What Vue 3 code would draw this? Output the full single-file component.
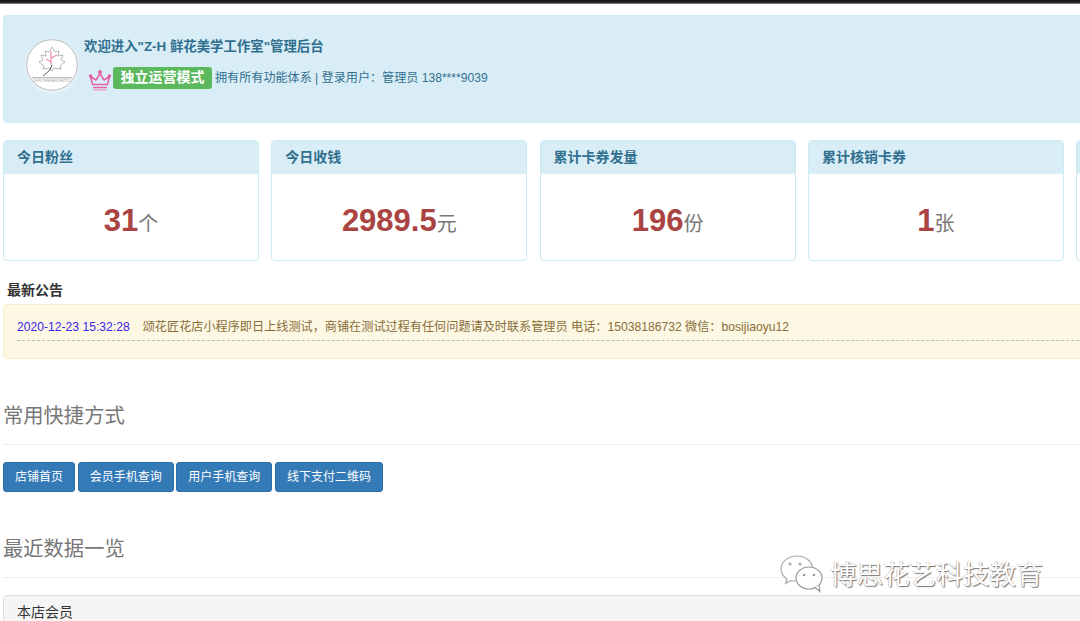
<template>
  <div class="page">
    <div class="topbar"></div>
    <div class="content">
      <div class="welcome">
        <div class="logo">
          <svg viewBox="0 0 52 52" width="52" height="52">
            <circle cx="26" cy="26" r="25.3" fill="#fff" stroke="#bbb" stroke-width="1" />
            <path d="M26 8l3 5 4-1-1 5 5-1-2 5 4 2-5 4 1 3-7-1-2 3-2-3-7 1 1-3-5-4 4-2-2-5 5 1-1-5 4 1z" fill="none" stroke="#888" stroke-width=".6" />
            <path d="M25 12v14M25 19l6-3M25 23l-5-3" fill="none" stroke="#e8668c" stroke-width=".9" />
            <path d="M26 26l-2 5-7 6" fill="none" stroke="#444" stroke-width=".9" />
            <rect x="6" y="38" width="40" height="1.4" fill="#bbb" />
          </svg>
          <span class="logo-text">ZH FLOWER AESTHETICS</span>
        </div>
        <div class="welcome-info">
          <h4 class="welcome-title">欢迎进入"Z-H 鲜花美学工作室"管理后台</h4>
          <div class="welcome-line">
            <svg class="crown" viewBox="0 0 24 22" width="24" height="22">
              <path d="M4.500 15.500L2.500 7.500l5.500 3.500L12 4.500l4 6.500 5.500-3.500-2 8z" fill="none" stroke="#e85fa5" stroke-width="1.500" stroke-linejoin="round" />
              <circle cx="2.500" cy="7" r="1.800" fill="#e85fa5" />
              <circle cx="12" cy="3" r="2" fill="#e85fa5" />
              <circle cx="21.500" cy="7" r="1.800" fill="#e85fa5" />
              <path d="M5 18.500h14" stroke="#e85fa5" stroke-width="1.400" />
              <path d="M5.500 20.800h13" stroke="#f09cc6" stroke-width="1.400" />
            </svg>
            <span class="mode-badge">独立运营模式</span>
            <span class="welcome-desc">拥有所有功能体系 | 登录用户：管理员 138****9039</span>
          </div>
        </div>
      </div>

      <div class="stats">
        <div class="stat-card" v-for="(item, i) in stats" :key="i">
          <div class="stat-head">{{ item.title }}</div>
          <div class="stat-body">
            <span class="stat-num">{{ item.value }}</span><span class="stat-unit">{{ item.unit }}</span>
          </div>
        </div>
      </div>

      <div class="notice-title">最新公告</div>
      <div class="notice">
        <div class="notice-row">
          <span class="notice-time">2020-12-23 15:32:28</span>
          <span class="notice-text">颂花匠花店小程序即日上线测试，商铺在测试过程有任何问题请及时联系管理员 电话：15038186732 微信：bosijiaoyu12</span>
        </div>
      </div>

      <h3 class="section-title">常用快捷方式</h3>
      <div class="shortcuts">
        <a class="btn" v-for="label in shortcuts" :key="label">{{ label }}</a>
      </div>

      <h3 class="section-title">最近数据一览</h3>
      <div class="panel">
        <div class="panel-head">本店会员</div>
      </div>
    </div>

    <div class="watermark">
      <svg viewBox="0 0 46 40" width="46" height="40">
        <path d="M18 2C9 2 2 8 2 15c0 4 2.400 7.500 6 10l-1.500 4.500 5.500-3c1.500.4 3 .6 4.500.6" fill="#fff" stroke="#aaa" stroke-width="1.200" />
        <path d="M18 2c8 0 14.500 5 15.500 11.500" fill="#fff" stroke="#aaa" stroke-width="1.200" />
        <ellipse cx="30" cy="24" rx="13" ry="11" fill="#fff" stroke="#999" stroke-width="1.200" />
        <path d="M36 33.500l5 4-1-6.500" fill="#fff" stroke="#999" stroke-width="1.200" />
        <circle cx="11" cy="10" r="1.500" fill="#aaa" />
        <circle cx="21" cy="10" r="1.500" fill="#aaa" />
        <circle cx="25" cy="21" r="1.300" fill="#999" />
        <circle cx="35" cy="21" r="1.300" fill="#999" />
      </svg>
      <span class="watermark-text">博思花艺科技教育</span>
    </div>
  </div>
</template>

<script setup>
// the last card is cut off by the window, only its left edge shows
const stats = [
  { title: '今日粉丝', value: '31', unit: '个' },
  { title: '今日收钱', value: '2989.5', unit: '元' },
  { title: '累计卡券发量', value: '196', unit: '份' },
  { title: '累计核销卡券', value: '1', unit: '张' },
  { title: '', value: '', unit: '' }
]

const shortcuts = ['店铺首页', '会员手机查询', '用户手机查询', '线下支付二维码']
</script>

<style>
html,
body {
  margin: 0;
  overflow: hidden;
  background: #fff;
}
</style>

<style scoped>
.page {
  position: relative;
  width: 1080px;
  height: 621px;
  overflow: hidden;
  font-family: "Liberation Sans", "Noto Sans CJK SC", sans-serif;
  font-size: 12px;
  color: #333;
}

.topbar {
  height: 4px;
  background: linear-gradient(#111 0, #222 60%, #999 100%);
}

.content {
  width: 1400px;
  margin: 11px 0 0 3px;
}

.welcome {
  display: flex;
  align-items: center;
  height: 108px;
  box-sizing: border-box;
  padding: 0 0 8px 22px;
  background: #d9edf7;
  border: 1px solid #c9ebf4;
  border-radius: 4px;
}

.logo {
  position: relative;
  width: 52px;
  height: 52px;
  flex: none;
  border-radius: 50%;
  box-shadow: 0 1px 3px rgba(255, 255, 255, 0.9);
}

.logo svg {
  display: block;
}

.logo-text {
  position: absolute;
  left: 0;
  right: 0;
  top: 40px;
  text-align: center;
  font-size: 3px;
  line-height: 4px;
  color: #999;
  white-space: nowrap;
}

.welcome-info {
  margin-left: 6px;
  margin-top: -2px;
  color: #31708f;
}

.welcome-title {
  margin: 0 0 10px;
  font-size: 13.400px;
  line-height: 18px;
  font-weight: 700;
}

.welcome-line {
  display: flex;
  align-items: center;
  margin-left: 4px;
}

.crown {
  flex: none;
  margin-top: 3px;
  margin-right: 1px;
}

.mode-badge {
  padding: 0 7.500px;
  height: 22px;
  line-height: 21px;
  font-size: 14px;
  font-weight: 700;
  color: #fff;
  background: #5cb85c;
  border-radius: 3px;
}

.welcome-desc {
  margin-left: 3px;
  font-size: 12.100px;
  line-height: 22px;
}

.stats {
  display: flex;
  gap: 12.300px;
  margin-top: 17px;
}

.stat-card {
  width: 256px;
  flex: none;
  height: 121px;
  box-sizing: border-box;
  background: #fff;
  border: 1px solid #c9ebf4;
  border-radius: 4px;
  overflow: hidden;
}

.stat-head {
  height: 33px;
  padding: 0 13px;
  line-height: 32px;
  font-size: 14px;
  font-weight: 700;
  color: #31708f;
  background: #d9edf7;
}

.stat-body {
  padding-top: 27px;
  text-align: center;
  line-height: 40px;
}

.stat-num {
  font-size: 31px;
  font-weight: 700;
  color: #a94442;
}

.stat-unit {
  font-size: 20px;
  color: #777;
}

.notice-title {
  margin: 19px 0 0 4px;
  font-size: 14px;
  line-height: 20px;
  font-weight: 700;
}

.notice {
  margin-top: 4px;
  height: 55px;
  box-sizing: border-box;
  padding: 13px 13px 0;
  background: #fcf8e3;
  border: 1px solid #faebcc;
  border-radius: 4px;
}

.notice-row {
  height: 22px;
  font-size: 12.150px;
  line-height: 19px;
  border-bottom: 1px dashed #bbb;
  white-space: nowrap;
}

.notice-time {
  color: #3a24f0;
  margin-right: 13px;
}

.notice-text {
  color: #8a6d3b;
}

.section-title {
  margin: 42px 0 0;
  font-size: 20.300px;
  line-height: 30px;
  font-weight: 400;
  color: #777;
  padding-bottom: 13px;
  border-bottom: 1px solid #eee;
}

.shortcuts {
  display: flex;
  gap: 2.670px;
  margin-top: 17px;
}

.btn {
  display: block;
  height: 30px;
  box-sizing: border-box;
  padding: 0 11px;
  line-height: 28px;
  font-size: 12px;
  color: #fff;
  background: #337ab7;
  border: 1px solid #2e6da4;
  border-radius: 3px;
}

.panel {
  margin-top: 17px;
  border: 1px solid #ddd;
  border-radius: 4px;
  background: #f5f5f5;
}

.panel-head {
  padding: 6px 13px;
  height: 40px;
  line-height: 20px;
  font-size: 14px;
}

.watermark {
  position: absolute;
  left: 779px;
  top: 552px;
  display: flex;
  align-items: center;
  gap: 5px;
}

.watermark-text {
  padding-top: 3px;
  font-size: 26.600px;
  line-height: 40px;
  color: #fff;
  text-shadow: 1px 1px 1px #777, -0.500px -0.500px 0 #aaa;
}
</style>
